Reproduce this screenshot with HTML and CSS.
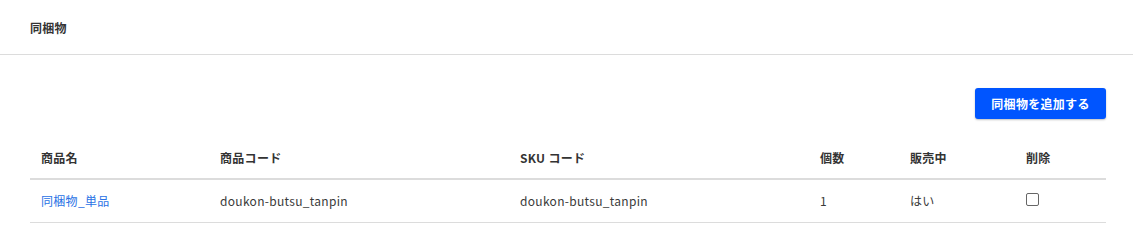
FILE: index.html
```html
<!DOCTYPE html>
<html lang="ja">
<head>
<meta charset="utf-8">
<link rel="stylesheet" href="styles.css">
</head>
<body>
<div class="page">
  <header class="head">
    <h1 class="title">同梱物</h1>
  </header>
  <section class="content">
    <div class="actions">
      <button class="btn-primary" type="button">同梱物を追加する</button>
    </div>
    <table class="tbl">
      <colgroup>
        <col class="c1"><col class="c2"><col class="c3"><col class="c4"><col class="c5"><col class="c6">
      </colgroup>
      <thead>
        <tr>
          <th>商品名</th>
          <th>商品コード</th>
          <th>SKU コード</th>
          <th>個数</th>
          <th>販売中</th>
          <th>削除</th>
        </tr>
      </thead>
      <tbody>
        <tr>
          <td><a class="link" href="#">同梱物_単品</a></td>
          <td>doukon-butsu_tanpin</td>
          <td>doukon-butsu_tanpin</td>
          <td>1</td>
          <td>はい</td>
          <td><span class="cb"></span></td>
        </tr>
      </tbody>
    </table>
  </section>
</div>
</body>
</html>
```
FILE: styles.css
```css
* { box-sizing: border-box; }
html, body { margin: 0; padding: 0; background: #fff; }
body {
  font-family: "Noto Sans CJK JP", "Noto Sans", sans-serif;
  color: #333;
  font-size: 12px;
}
.head {
  height: 55px;
  border-bottom: 1px solid #dcdcdc;
  padding: 0 30px;
  display: flex;
  align-items: center;
}
.title {
  margin: 0;
  font-size: 12px;
  font-weight: 700;
  color: #333;
  letter-spacing: 0.3px;
}
.content {
  padding: 33px 27px 0 30px;
}
.actions {
  display: flex;
  justify-content: flex-end;
}
.btn-primary {
  width: 131px;
  height: 31px;
  border: 0;
  border-radius: 3px;
  background: #0055ff;
  color: #fff;
  font-family: inherit;
  font-size: 12px;
  font-weight: 700;
  letter-spacing: 0.3px;
  box-shadow: 0 1px 2px rgba(0,0,0,0.25);
  padding: 0;
}
.tbl {
  width: 100%;
  margin-top: 18px;
  border-collapse: collapse;
  table-layout: fixed;
}
.c1 { width: 179px; }
.c2 { width: 300px; }
.c3 { width: 300px; }
.c4 { width: 90px; }
.c5 { width: 116px; }
.c6 { width: 91px; }
.tbl th, .tbl td {
  text-align: left;
  padding: 0 11px;
  letter-spacing: 0.3px;
}
.tbl th {
  height: 42px;
  font-weight: 700;
  border-bottom: 2px solid #dcdcdc;
}
.tbl td {
  height: 43px;
  border-bottom: 1px solid #dcdcdc;
  color: #3a3a3a;
}
.link {
  color: #2a72e5;
  text-decoration: none;
}
.cb {
  display: block;
  width: 13px;
  height: 13px;
  border: 1px solid #666;
  border-radius: 2px;
  margin-top: -2px;
}
```
